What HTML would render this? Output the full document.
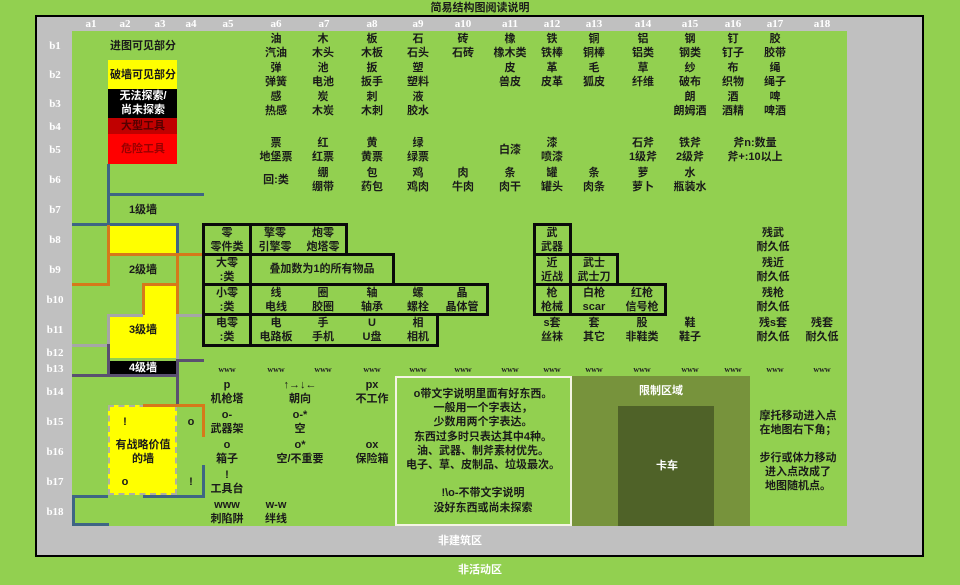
<!DOCTYPE html>
<html><head><meta charset="utf-8"><style>
body{margin:0;width:960px;height:585px;background:#92d050;position:relative;overflow:hidden;font-family:"Liberation Sans","Noto Sans CJK SC",sans-serif}
div{position:absolute;box-sizing:border-box}
.t{transform:translate(-50%,-50%);text-align:center;white-space:nowrap;font:bold 11px/14px "Liberation Sans","Noto Sans CJK SC",sans-serif;color:#1a1a1a}
.h{transform:translate(-50%,-50%);color:#fff;font:bold 11px/12px "Liberation Serif","Noto Serif CJK SC",serif;white-space:nowrap}
.w{transform:translate(-50%,-50%);font:bold 8px/10px "Liberation Serif",serif;color:#222}
.bx{border:3px solid #0a0a0a}
.ln{background:#3e6584}
.or{background:#d6791a}
.gr{background:#a6a6a6}
.pu{background:#5a5070}
</style></head><body>
<div class="t" style="left:480px;top:8px">简易结构图阅读说明</div>
<div style="left:35px;top:15px;width:889px;height:542px;border:2px solid #000;background:#c0c0c0"></div>
<div style="left:72px;top:31px;width:775px;height:495px;background:#92d050"></div>
<div class="t" style="left:460px;top:541px;color:#fff">非建筑区</div>
<div class="t" style="left:480px;top:570px;color:#fff">非活动区</div>

<!-- headers -->
<div class="h" style="left:91px;top:24px">a1</div><div class="h" style="left:125px;top:24px">a2</div><div class="h" style="left:160px;top:24px">a3</div><div class="h" style="left:191px;top:24px">a4</div><div class="h" style="left:228px;top:24px">a5</div><div class="h" style="left:276px;top:24px">a6</div><div class="h" style="left:324px;top:24px">a7</div><div class="h" style="left:372px;top:24px">a8</div><div class="h" style="left:418px;top:24px">a9</div><div class="h" style="left:463px;top:24px">a10</div><div class="h" style="left:510px;top:24px">a11</div><div class="h" style="left:552px;top:24px">a12</div><div class="h" style="left:594px;top:24px">a13</div><div class="h" style="left:643px;top:24px">a14</div><div class="h" style="left:690px;top:24px">a15</div><div class="h" style="left:733px;top:24px">a16</div><div class="h" style="left:775px;top:24px">a17</div><div class="h" style="left:822px;top:24px">a18</div>
<div class="h" style="left:55px;top:46px">b1</div><div class="h" style="left:55px;top:75px">b2</div><div class="h" style="left:55px;top:104px">b3</div><div class="h" style="left:55px;top:127px">b4</div><div class="h" style="left:55px;top:150px">b5</div><div class="h" style="left:55px;top:180px">b6</div><div class="h" style="left:55px;top:210px">b7</div><div class="h" style="left:55px;top:240px">b8</div><div class="h" style="left:55px;top:270px">b9</div><div class="h" style="left:55px;top:300px">b10</div><div class="h" style="left:55px;top:330px">b11</div><div class="h" style="left:55px;top:353px">b12</div><div class="h" style="left:55px;top:369px">b13</div><div class="h" style="left:55px;top:392px">b14</div><div class="h" style="left:55px;top:422px">b15</div><div class="h" style="left:55px;top:452px">b16</div><div class="h" style="left:55px;top:482px">b17</div><div class="h" style="left:55px;top:512px">b18</div>

<!-- legend -->
<div class="t" style="left:143px;top:46px">进图可见部分</div>
<div style="left:108px;top:60px;width:69px;height:29px;background:#ffff00"></div>
<div class="t" style="left:143px;top:75px">破墙可见部分</div>
<div style="left:108px;top:89px;width:69px;height:29px;background:#000"></div>
<div class="t" style="left:143px;top:103px;color:#fff">无法探索/<br>尚未探索</div>
<div style="left:108px;top:118px;width:69px;height:16px;background:#c00000"></div>
<div class="t" style="left:143px;top:126px;color:#500">大型工具</div>
<div style="left:108px;top:134px;width:69px;height:30px;background:#ff0000"></div>
<div class="t" style="left:143px;top:149px;color:#900">危险工具</div>

<!-- walls -->
<div style="left:108px;top:224px;width:69px;height:30px;background:#ffff00"></div>
<div style="left:143px;top:285px;width:34px;height:30px;background:#ffff00"></div>
<div style="left:108px;top:315px;width:69px;height:43px;background:#ffff00"></div>
<div style="left:108px;top:361px;width:69px;height:14px;background:#000"></div>
<div style="left:108px;top:405px;width:69px;height:90px;background:#ffff00;border:2px dashed #b0b0a0"></div>

<div class="ln" style="left:107px;top:164px;width:3px;height:61px"></div>
<div class="ln" style="left:108px;top:193px;width:96px;height:3px"></div>
<div class="ln" style="left:72px;top:223px;width:106px;height:3px"></div>
<div class="ln" style="left:176px;top:223px;width:3px;height:32px"></div>
<div class="or" style="left:107px;top:225px;width:3px;height:61px"></div>
<div class="or" style="left:72px;top:283px;width:38px;height:3px"></div>
<div class="or" style="left:108px;top:253px;width:96px;height:3px"></div>
<div class="or" style="left:176px;top:254px;width:3px;height:61px"></div>
<div class="or" style="left:142px;top:283px;width:36px;height:3px"></div>
<div class="or" style="left:142px;top:283px;width:3px;height:32px"></div>
<div class="gr" style="left:107px;top:314px;width:3px;height:32px"></div>
<div class="gr" style="left:108px;top:314px;width:35px;height:3px"></div>
<div class="gr" style="left:176px;top:314px;width:28px;height:3px"></div>
<div class="gr" style="left:176px;top:315px;width:3px;height:44px"></div>
<div class="gr" style="left:72px;top:344px;width:38px;height:3px"></div>
<div class="pu" style="left:107px;top:344px;width:3px;height:32px"></div>
<div class="pu" style="left:72px;top:374px;width:106px;height:3px"></div>
<div class="pu" style="left:176px;top:359px;width:28px;height:3px"></div>
<div class="pu" style="left:176px;top:359px;width:3px;height:46px"></div>
<div class="or" style="left:143px;top:404px;width:62px;height:3px"></div>
<div class="or" style="left:202px;top:404px;width:3px;height:33px"></div>
<div class="ln" style="left:202px;top:465px;width:3px;height:32px"></div>
<div class="ln" style="left:72px;top:495px;width:36px;height:3px"></div>
<div class="ln" style="left:143px;top:495px;width:62px;height:3px"></div>
<div class="ln" style="left:72px;top:495px;width:3px;height:31px"></div>
<div class="ln" style="left:72px;top:523px;width:37px;height:3px"></div>

<div class="t" style="left:143px;top:210px">1级墙</div>
<div class="t" style="left:143px;top:270px">2级墙</div>
<div class="t" style="left:143px;top:330px">3级墙</div>
<div class="t" style="left:143px;top:368px;color:#fff">4级墙</div>
<div class="t" style="left:143px;top:452px">有战略价值<br>的墙</div>
<div class="t" style="left:125px;top:422px">!</div><div class="t" style="left:191px;top:422px">o</div>
<div class="t" style="left:125px;top:482px">o</div><div class="t" style="left:191px;top:482px">!</div>

<!-- boxes -->
<div class="bx" style="left:202px;top:223px;width:50px;height:33px"></div>
<div class="bx" style="left:249px;top:223px;width:99px;height:33px"></div>
<div class="bx" style="left:202px;top:253px;width:50px;height:33px"></div>
<div class="bx" style="left:249px;top:253px;width:146px;height:33px"></div>
<div class="bx" style="left:202px;top:283px;width:50px;height:33px"></div>
<div class="bx" style="left:249px;top:283px;width:240px;height:33px"></div>
<div class="bx" style="left:202px;top:313px;width:50px;height:34px"></div>
<div class="bx" style="left:249px;top:313px;width:190px;height:34px"></div>
<div class="bx" style="left:533px;top:223px;width:39px;height:33px"></div>
<div class="bx" style="left:533px;top:253px;width:39px;height:33px"></div>
<div class="bx" style="left:569px;top:253px;width:50px;height:33px"></div>
<div class="bx" style="left:533px;top:283px;width:39px;height:33px"></div>
<div class="bx" style="left:569px;top:283px;width:98px;height:33px"></div>

<!-- bottom areas -->
<div style="left:395px;top:376px;width:177px;height:150px;border:2px solid #f4f4e4"></div>
<div style="left:572px;top:376px;width:178px;height:150px;background:#77933c"></div>
<div style="left:618px;top:406px;width:96px;height:120px;background:#4f6228"></div>
<div class="t" style="left:661px;top:391px;color:#fff">限制区域</div>
<div class="t" style="left:667px;top:466px;color:#fff">卡车</div>
<div class="t" style="left:483px;top:451px;line-height:14.2px">o带文字说明里面有好东西。<br>一般用一个字表达，<br>少数用两个字表达。<br>东西过多时只表达其中4种。<br>油、武器、制斧素材优先。<br>电子、草、皮制品、垃圾最次。<br><br>!\o-不带文字说明<br>没好东西或尚未探索</div>
<div class="t" style="left:798px;top:451px">摩托移动进入点<br>在地图右下角；<br><br>步行或体力移动<br>进入点改成了<br>地图随机点。</div>

<!-- items -->
<div class="t" style="left:276px;top:46px">油<br>汽油</div><div class="t" style="left:323px;top:46px">木<br>木头</div><div class="t" style="left:372px;top:46px">板<br>木板</div><div class="t" style="left:418px;top:46px">石<br>石头</div><div class="t" style="left:463px;top:46px">砖<br>石砖</div><div class="t" style="left:510px;top:46px">橡<br>橡木类</div><div class="t" style="left:552px;top:46px">铁<br>铁棒</div><div class="t" style="left:594px;top:46px">铜<br>铜棒</div><div class="t" style="left:643px;top:46px">铝<br>铝类</div><div class="t" style="left:690px;top:46px">钢<br>钢类</div><div class="t" style="left:733px;top:46px">钉<br>钉子</div><div class="t" style="left:775px;top:46px">胶<br>胶带</div>
<div class="t" style="left:276px;top:75px">弹<br>弹簧</div><div class="t" style="left:323px;top:75px">池<br>电池</div><div class="t" style="left:372px;top:75px">扳<br>扳手</div><div class="t" style="left:418px;top:75px">塑<br>塑料</div><div class="t" style="left:510px;top:75px">皮<br>兽皮</div><div class="t" style="left:552px;top:75px">革<br>皮革</div><div class="t" style="left:594px;top:75px">毛<br>狐皮</div><div class="t" style="left:643px;top:75px">草<br>纤维</div><div class="t" style="left:690px;top:75px">纱<br>破布</div><div class="t" style="left:733px;top:75px">布<br>织物</div><div class="t" style="left:775px;top:75px">绳<br>绳子</div>
<div class="t" style="left:276px;top:104px">感<br>热感</div><div class="t" style="left:323px;top:104px">炭<br>木炭</div><div class="t" style="left:372px;top:104px">刺<br>木刺</div><div class="t" style="left:418px;top:104px">液<br>胶水</div><div class="t" style="left:690px;top:104px">朗<br>朗姆酒</div><div class="t" style="left:733px;top:104px">酒<br>酒精</div><div class="t" style="left:775px;top:104px">啤<br>啤酒</div>
<div class="t" style="left:276px;top:150px">票<br>地堡票</div><div class="t" style="left:323px;top:150px">红<br>红票</div><div class="t" style="left:372px;top:150px">黄<br>黄票</div><div class="t" style="left:418px;top:150px">绿<br>绿票</div><div class="t" style="left:510px;top:150px">白漆</div><div class="t" style="left:552px;top:150px">漆<br>喷漆</div><div class="t" style="left:643px;top:150px">石斧<br>1级斧</div><div class="t" style="left:690px;top:150px">铁斧<br>2级斧</div><div class="t" style="left:755px;top:150px">斧n:数量<br>斧+:10以上</div>
<div class="t" style="left:276px;top:180px">回:类</div><div class="t" style="left:323px;top:180px">绷<br>绷带</div><div class="t" style="left:372px;top:180px">包<br>药包</div><div class="t" style="left:418px;top:180px">鸡<br>鸡肉</div><div class="t" style="left:463px;top:180px">肉<br>牛肉</div><div class="t" style="left:510px;top:180px">条<br>肉干</div><div class="t" style="left:552px;top:180px">罐<br>罐头</div><div class="t" style="left:594px;top:180px">条<br>肉条</div><div class="t" style="left:643px;top:180px">萝<br>萝卜</div><div class="t" style="left:690px;top:180px">水<br>瓶装水</div>
<div class="t" style="left:227px;top:240px">零<br>零件类</div><div class="t" style="left:275px;top:240px">擎零<br>引擎零</div><div class="t" style="left:323px;top:240px">炮零<br>炮塔零</div><div class="t" style="left:552px;top:240px">武<br>武器</div><div class="t" style="left:773px;top:240px">残武<br>耐久低</div>
<div class="t" style="left:227px;top:270px">大零<br>:类</div><div class="t" style="left:322px;top:269px">叠加数为1的所有物品</div><div class="t" style="left:552px;top:270px">近<br>近战</div><div class="t" style="left:594px;top:270px">武士<br>武士刀</div><div class="t" style="left:773px;top:270px">残近<br>耐久低</div>
<div class="t" style="left:227px;top:300px">小零<br>:类</div><div class="t" style="left:276px;top:300px">线<br>电线</div><div class="t" style="left:323px;top:300px">圈<br>胶圈</div><div class="t" style="left:372px;top:300px">轴<br>轴承</div><div class="t" style="left:418px;top:300px">螺<br>螺栓</div><div class="t" style="left:462px;top:300px">晶<br>晶体管</div><div class="t" style="left:552px;top:300px">枪<br>枪械</div><div class="t" style="left:594px;top:300px">白枪<br>scar</div><div class="t" style="left:642px;top:300px">红枪<br>信号枪</div><div class="t" style="left:773px;top:300px">残枪<br>耐久低</div>
<div class="t" style="left:227px;top:330px">电零<br>:类</div><div class="t" style="left:276px;top:330px">电<br>电路板</div><div class="t" style="left:323px;top:330px">手<br>手机</div><div class="t" style="left:372px;top:330px">U<br>U盘</div><div class="t" style="left:418px;top:330px">相<br>相机</div><div class="t" style="left:552px;top:330px">s套<br>丝袜</div><div class="t" style="left:594px;top:330px">套<br>其它</div><div class="t" style="left:642px;top:330px">股<br>非鞋类</div><div class="t" style="left:690px;top:330px">鞋<br>鞋子</div><div class="t" style="left:773px;top:330px">残s套<br>耐久低</div><div class="t" style="left:822px;top:330px">残套<br>耐久低</div>
<div class="w" style="left:227px;top:370px">www</div><div class="w" style="left:276px;top:370px">www</div><div class="w" style="left:323px;top:370px">www</div><div class="w" style="left:372px;top:370px">www</div><div class="w" style="left:418px;top:370px">www</div><div class="w" style="left:463px;top:370px">www</div><div class="w" style="left:510px;top:370px">www</div><div class="w" style="left:552px;top:370px">www</div><div class="w" style="left:594px;top:370px">www</div><div class="w" style="left:642px;top:370px">www</div><div class="w" style="left:690px;top:370px">www</div><div class="w" style="left:733px;top:370px">www</div><div class="w" style="left:775px;top:370px">www</div><div class="w" style="left:822px;top:370px">www</div>
<div class="t" style="left:227px;top:392px">p<br>机枪塔</div><div class="t" style="left:300px;top:392px">↑→↓←<br>朝向</div><div class="t" style="left:372px;top:392px">px<br>不工作</div>
<div class="t" style="left:227px;top:422px">o-<br>武器架</div><div class="t" style="left:300px;top:422px">o-*<br>空</div>
<div class="t" style="left:227px;top:452px">o<br>箱子</div><div class="t" style="left:300px;top:452px">o*<br>空/不重要</div><div class="t" style="left:372px;top:452px">ox<br>保险箱</div>
<div class="t" style="left:227px;top:482px">!<br>工具台</div>
<div class="t" style="left:227px;top:512px">www<br>刺陷阱</div><div class="t" style="left:276px;top:512px">w-w<br>绊线</div>
</body></html>
